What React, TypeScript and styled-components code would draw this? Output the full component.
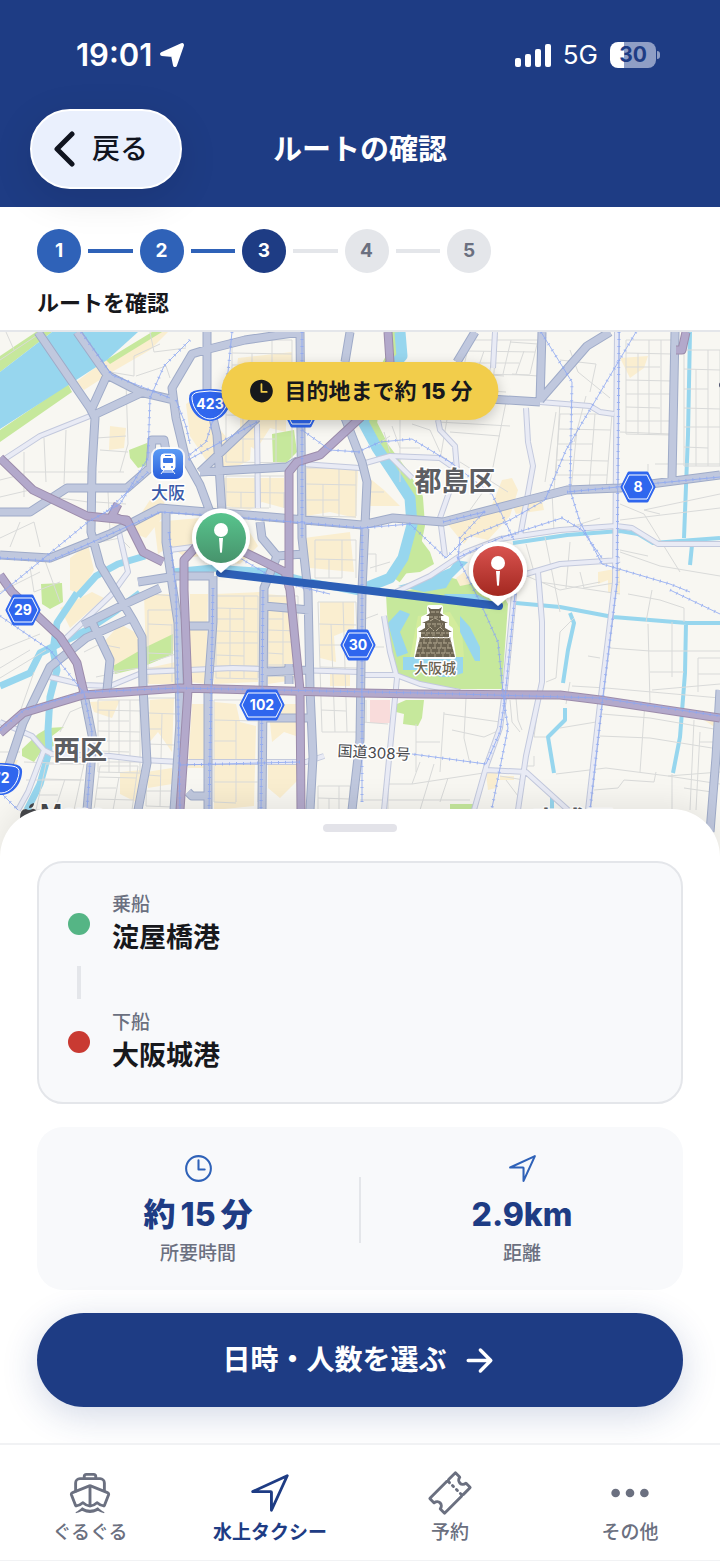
import React from 'react';
import styled, { createGlobalStyle, css } from 'styled-components';
import {
  IoArrowForward,
  IoBoatOutline,
  IoEllipsisHorizontal,
  IoNavigateOutline,
  IoTicketOutline,
  IoTime,
  IoTimeOutline,
} from 'react-icons/io5';

const colors = {
  navy: '#1e3c84',
  blue: '#2f62b8',
  ink: '#17181c',
  gray: '#6b7080',
  line: '#e4e6ea',
  surface: '#f8f9fb',
  yellow: '#f2cd4b',
  green: '#55b585',
  red: '#c93a32',
};

const GlobalStyle = createGlobalStyle`
  * {
    box-sizing: border-box;
  }

  body {
    margin: 0;
    background: white;
    color: ${colors.ink};
    font-family: Inter, 'Noto Sans CJK JP', sans-serif;
  }

  button {
    font-family: inherit;
    cursor: pointer;
  }
`;

const Page = styled.div`
  display: flex;
  flex-direction: column;
`;

/* ---------- header ---------- */

const Header = styled.header`
  position: relative;
  z-index: 2;
  background: ${colors.navy};
  color: white;
`;

const StatusBar = styled.div`
  display: flex;
  align-items: center;
  justify-content: space-between;
  height: 109px;
  padding: 0 60px 0 76px;
`;

const StatusGroup = styled.div<{ $gap: number }>`
  display: flex;
  align-items: center;
  gap: ${({ $gap }) => $gap}px;
`;

const Clock = styled.span`
  font-size: 31px;
  line-height: 40px;
  font-weight: 600;
`;

const Network = styled.span`
  font-size: 26px;
  line-height: 40px;
`;

const Battery = styled.span`
  display: flex;
  align-items: center;
  gap: 1px;

  &::after {
    content: '';
    width: 3px;
    height: 8px;
    border-radius: 0 4px 4px 0;
    background: #8f9ec5;
  }
`;

const BatteryLevel = styled.span`
  width: 46px;
  height: 26px;
  border-radius: 8px;
  background: linear-gradient(90deg, white 30%, #8f9ec5 30%);
  color: ${colors.navy};
  font-size: 21px;
  line-height: 26px;
  font-weight: 700;
  text-align: center;
`;

const NavBar = styled.div`
  display: grid;
  grid-template-columns: 1fr auto 1fr;
  align-items: center;
  padding: 0 30px 18px;
`;

const BackButton = styled.button`
  display: flex;
  align-items: center;
  justify-self: start;
  gap: 16px;
  height: 80px;
  padding: 0 32px 0 20px;
  border: 2px solid white;
  border-radius: 40px;
  background: #eaf0fd;
  color: #10141f;
  font-size: 28px;
  line-height: 40px;
  font-weight: 500;
  box-shadow: 0 10px 40px rgba(0, 0, 0, 0.1);
`;

const Title = styled.h1`
  margin: 0;
  padding-top: 2px;
  font-size: 29px;
  line-height: 40px;
  font-weight: 700;
`;

/* ---------- steps ---------- */

const StepSection = styled.section`
  padding: 22px 37px 11px;
  border-bottom: 2px solid ${colors.line};
`;

const StepList = styled.ol`
  display: flex;
  align-items: center;
  gap: 7px;
  max-width: 454px;
  margin: 0 0 14px;
  padding: 0;
  list-style: none;
`;

type StepState = 'done' | 'current' | 'todo';

const stepColors = {
  done: css`
    background: ${colors.blue};
    color: white;
  `,
  current: css`
    background: ${colors.navy};
    color: white;
  `,
  todo: css`
    background: ${colors.line};
    color: ${colors.gray};
  `,
};

const StepCircle = styled.li<{ $state: StepState }>`
  flex: none;
  width: 44px;
  height: 44px;
  border-radius: 50%;
  font-size: 19px;
  line-height: 44px;
  font-weight: 700;
  text-align: center;
  ${({ $state }) => stepColors[$state]}
`;

const StepBar = styled.li<{ $done: boolean }>`
  flex: 1;
  height: 4px;
  background: ${({ $done }) => ($done ? colors.blue : colors.line)};
`;

const StepLabel = styled.p`
  margin: 0;
  font-size: 22px;
  line-height: 32px;
  font-weight: 700;
`;

/* ---------- map ---------- */

const MapArea = styled.section`
  position: relative;
  height: 528px;
  background: #f8f7f2;
`;

const MapSvg = styled.svg`
  display: block;
  width: 100%;
  height: 100%;
`;

const EtaPill = styled.div`
  position: absolute;
  top: 30px;
  left: 50%;
  transform: translateX(-50%);
  display: flex;
  align-items: center;
  gap: 9px;
  height: 58px;
  padding: 0 26px;
  border-radius: 29px;
  background: ${colors.yellow};
  font-size: 22px;
  line-height: 32px;
  font-weight: 700;
  white-space: nowrap;
  box-shadow: 0 4px 14px rgba(0, 0, 0, 0.2);
`;

const Amount = styled.span`
  margin: 0 5px;
  font-weight: 800;
`;

/* ---------- sheet ---------- */

const Sheet = styled.main`
  position: relative;
  display: flex;
  flex-direction: column;
  margin-top: -51px;
  padding: 15px 37px 36px;
  border-radius: 48px 48px 0 0;
  background: white;
  box-shadow: 0 -6px 30px rgba(0, 0, 0, 0.08);
`;

const Handle = styled.div`
  align-self: center;
  width: 74px;
  height: 8px;
  margin-bottom: 29px;
  border-radius: 4px;
  background: #e3e3e9;
`;

const PortCard = styled.div`
  padding: 28px 29px 27px;
  border: 2px solid ${colors.line};
  border-radius: 26px;
  background: ${colors.surface};
`;

const Port = styled.div`
  display: flex;
  align-items: center;
  gap: 22px;
`;

const PortDot = styled.span<{ $color: string }>`
  width: 22px;
  height: 22px;
  border-radius: 50%;
  background: ${({ $color }) => $color};
`;

const Connector = styled.div`
  width: 4px;
  height: 33px;
  margin: 9px 9px 10px;
  background: ${colors.line};
`;

const Caption = styled.p`
  margin: 0;
  color: ${colors.gray};
  font-size: 19px;
  line-height: 28px;
  font-weight: 500;
`;

const PortName = styled.p`
  margin: 0;
  font-size: 27px;
  line-height: 38px;
  font-weight: 700;
`;

const SummaryCard = styled.div`
  display: grid;
  grid-template-columns: 1fr 2px 1fr;
  align-items: center;
  margin: 23px 0;
  padding: 25px 0 22px;
  border-radius: 26px;
  background: ${colors.surface};
`;

const Summary = styled.div`
  display: flex;
  flex-direction: column;
  align-items: center;
  color: ${colors.blue};
`;

const SummaryValue = styled.p`
  margin: 10px 0 5px;
  color: ${colors.navy};
  font-size: 32px;
  line-height: 40px;
  font-weight: 800;
`;

const Divider = styled.div`
  height: 66px;
  background: ${colors.line};
`;

const NextButton = styled.button`
  display: flex;
  align-items: center;
  justify-content: center;
  gap: 14px;
  height: 94px;
  border: none;
  border-radius: 47px;
  background: ${colors.navy};
  color: white;
  font-size: 28px;
  line-height: 40px;
  font-weight: 700;
  box-shadow: 0 8px 36px rgba(30, 60, 132, 0.2);
`;

/* ---------- tab bar ---------- */

const TabBar = styled.nav`
  position: relative;
  display: grid;
  grid-template-columns: repeat(4, 1fr);
  padding: 25px 0 13px;
  border-top: 2px solid #f1f2f4;
  border-bottom: 1px solid #f1f2f4;
  background: white;
`;

const Tab = styled.a<{ $active?: boolean }>`
  display: flex;
  flex-direction: column;
  align-items: center;
  gap: 3px;
  color: ${({ $active }) => ($active ? colors.navy : colors.gray)};
  font-size: 19px;
  line-height: 28px;
  font-weight: ${({ $active }) => ($active ? 700 : 500)};
  text-decoration: none;
`;

/* ---------- map drawing ---------- */

const streetGrid = (
  x0: number,
  y0: number,
  x1: number,
  y1: number,
  cols: number,
  rows: number,
  skew = 0,
) => {
  let d = '';
  for (let i = 0; i <= cols; i++) {
    const x = Math.round(x0 + ((x1 - x0) * i) / cols);
    const top = i % 3 === 1 ? y0 + Math.round((y1 - y0) / rows) : y0;
    d += `M${x} ${top}L${x - skew} ${y1}`;
  }
  for (let j = 0; j <= rows; j++) {
    const y = Math.round(y0 + ((y1 - y0) * j) / rows);
    const shift = Math.round((skew * j) / rows);
    const right = j % 3 === 2 ? x1 - Math.round((x1 - x0) / cols) : x1;
    d += `M${x0 - shift} ${y}L${right - shift} ${y + (j % 2)}`;
  }
  return d;
};

const streets = [
  streetGrid(470, 8, 538, 42, 5, 3, 8),
  streetGrid(626, 8, 672, 102, 4, 7),
  streetGrid(684, 18, 720, 134, 3, 6),
  streetGrid(560, 82, 612, 158, 3, 5, 6),
  streetGrid(98, 368, 140, 440, 4, 7),
  streetGrid(148, 366, 176, 474, 2, 7, 2),
  streetGrid(216, 264, 258, 346, 3, 7),
  streetGrid(214, 368, 258, 470, 2, 5),
  streetGrid(268, 264, 298, 344, 2, 7),
  streetGrid(318, 270, 356, 400, 3, 6, -4),
  streetGrid(318, 454, 350, 478, 3, 2),
  streetGrid(46, 432, 84, 478, 2, 3, 10),
  streetGrid(100, 434, 138, 478, 2, 4, 6),
  streetGrid(315, 208, 356, 246, 3, 2),
  streetGrid(232, 8, 292, 46, 3, 3),
  streetGrid(226, 60, 292, 130, 4, 3),
  streetGrid(226, 144, 284, 176, 4, 2),
  streetGrid(306, 136, 356, 184, 3, 3),
  streetGrid(148, 278, 172, 350, 1, 5),
  'M0 28L36 4M6 0L14 18M24 140H90M24 120V165M44 106L46 150M66 98L64 152M0 206L34 190L40 215M0 165L30 158L60 166L88 170',
  'M0 148L24 142M10 215L20 190M30 235L34 260L60 250M44 226L60 270M0 260L40 240M96 106L126 104M100 118L128 120M98 140H124M126 50L128 112L120 140M110 40L134 44V24L160 12',
  'M136 44L166 34L170 46M150 0L154 20L186 16M100 210L120 206L130 216M96 170L126 172M108 160L110 200M0 318L40 302M0 336L30 318M0 346L46 318M34 340L20 380L4 400M60 400L70 380L84 374',
  'M0 420H20M24 430L84 432M26 448H84M110 340L140 336M96 345L120 340M84 320L100 312L120 316M148 262L176 264M150 330L176 322',
  'M400 60V150M412 92L430 98L440 120M438 90L510 94M450 70L440 128M460 130L508 160M506 70L490 150L470 178M556 80L545 150M392 94L400 116H420M382 84L430 80M384 100L390 120M378 112L390 104M366 160H384M368 222H376V240M370 236L390 230',
  'M450 100L500 104M455 40L504 44M440 56L506 60M497 4L492 64M510 10L538 12M512 42L538 44M560 28L596 32L590 60M570 18L578 40L610 66M586 64L574 110M560 70L556 140',
  'M660 182L644 178L720 162M644 182L680 240M620 172L644 182M620 188L720 176M655 132H720M620 100L670 102M648 132V145M620 220L660 234L720 244M552 160L554 200L600 186M545 205L560 280M570 210L566 256',
  'M517 240L560 258L600 250M526 212L534 240M540 250L620 262M580 240L584 256L620 250M628 262L660 268L684 276V290M652 258L646 290M620 218L648 224',
  'M610 316L650 319H720M588 324L600 326M648 292L650 372M650 340H684M672 290V345M698 326V360M698 326H720M698 342H720M652 358L720 352M570 350L566 372M572 354L606 356L720 366M546 350L556 346L560 300L574 286',
  'M602 382L650 386L720 398M600 404L650 406L712 416M645 370L640 440M560 396L596 390M556 442L606 436L668 444L720 440M594 458L618 456L624 448L654 450L656 440M672 442V478M694 388L690 478M700 400L696 478M684 456L712 460M668 444L720 452M700 410H716',
  'M416 392V440M416 410H440M444 380L440 440M444 382L500 390M466 366L464 406L470 432M452 398L484 405L500 398M388 452H412L490 440M434 432L420 478M448 446L440 470M360 468H470M388 478V452M412 452L420 430M510 368L512 390L520 400M516 366L518 388L522 398M540 360L534 405H546M534 424V434H526',
  'M360 315H384M362 390L388 392M366 368V390M362 288L378 282M500 444L524 448M506 448L518 464',
].join('');

const beige = [
  'M76 50L108 26L126 22L158 0H168L150 18L112 40L84 58Z',
  'M110 94L126 96L124 116L109 118Z',
  'M186 72L204 60L212 88L232 112L252 98L250 128L226 140L206 128L190 104Z',
  'M226 66L260 80L286 78V100L270 96L256 118L240 108V86Z',
  'M238 26L292 20V50L270 46L256 56L236 44Z',
  'M154 190L200 186L210 196L246 194L258 214L240 232L200 224L186 226L170 214L158 222Z',
  'M224 146H284V176L262 170L250 178L226 174Z',
  'M106 190L130 198L150 168L166 160L162 186L146 206Z',
  'M70 226L88 212L94 238L80 262L70 258Z',
  'M306 134L358 138L356 186L330 180L306 184Z',
  'M304 206L350 200L354 240L310 236Z',
  'M60 276L92 260L104 266L70 296Z',
  'M120 292L142 304L138 332L112 338L104 310Z',
  'M144 262L174 262L178 318L146 324Z',
  'M148 336L176 330V352H148ZM150 368L174 366L172 420L158 400L148 412ZM90 370L120 368L112 386L94 380Z',
  'M190 262H208L206 352L190 350ZM192 372H206V436H188Z',
  'M216 262L260 260L258 350L214 352Z',
  'M214 370L236 372L240 390L256 394L254 474L214 478Z',
  'M266 262L288 264L294 348L268 352Z',
  'M268 372H296V404L284 400L272 410ZM268 430H298V448L280 466L268 456Z',
  'M320 270H354V296L334 304L336 330L320 326ZM330 340H350V354H330Z',
  'M120 440L142 438L136 470L120 462ZM146 440L172 436V452L148 456Z',
  'M362 140L384 158L400 174H368Z',
  'M446 190L490 178L502 148L512 146L518 158L510 184L488 208L470 204L464 212Z',
  'M512 172L542 168L544 178L516 182Z',
  'M620 26L648 24L644 36L630 46Z',
  'M598 240L620 236V262L608 260V248L598 252Z',
  'M486 442L498 438L496 456L488 458ZM500 444H514V448H500Z',
  'M702 378L716 382V396L704 388ZM0 430L18 428L14 438H0Z',
].join('');

const greens = [
  'M0 24L36 0H52L0 40Z',
  'M0 98L68 52L72 60L0 110Z',
  'M106 28L152 0H162L110 32Z',
  'M272 102L294 98L297 120L286 131L273 130Z',
  'M129 118L147 111V133L138 136L130 126Z',
  'M41 252L62 251L63 270L50 277L42 272Z',
  'M113 334L144 316L173 302V322L140 336L115 342Z',
  'M22 417L38 402L48 396L64 395L52 404L54 414L42 418L34 430L22 424Z',
  'M298 346H303V353H299Z',
  'M397 372L406 368H424L422 386L418 394L403 392L404 382L396 380Z',
  'M450 472H474L470 480H450Z',
].join('');

const waterways = [
  'M690 0L688 103L684 206',
  'M692 213L690 233',
  'M513 211L567 203L620 199L638 202L653 211L720 206',
  'M516 271L560 275L613 285L687 291H720',
  'M686 291L685 341L680 405L673 441',
  'M570 281L574 291L568 318L563 351',
  'M565 376V388L548 405L554 441',
  'M552 464V478',
].join('');

const canals = [
  'M140 261L117 278L87 298L67 308L40 321L30 341L0 354',
  'M77 261L57 291L53 318L57 338L50 365L48 398L49 420L40 452L27 478',
  'M78 264L96 244L118 232L145 224M172 240L213 236L270 240L310 250L360 260L376 256',
].join('');

const lightRoads = [
  'M495 0L493 36M540 70L590 74L600 80L614 82',
  'M526 76L528 110L533 134L520 205',
  'M438 88L440 98L455 114L457 138L440 186L445 224',
  'M362 132L390 124L440 126L460 140M390 124L412 146',
  'M617 0L615 250L600 372L588 478',
  'M396 260L430 244L466 220L500 207L560 198L616 194L632 196L658 212L720 212',
  'M526 242L560 232L620 228',
  'M538 240L542 290V350L526 424L518 478',
  'M516 240L514 262L504 366L500 396L487 432L474 478',
  'M384 284L390 320L397 346L384 478',
  'M360 343H396L420 352L460 360',
  'M486 438L526 440L568 478',
  'M0 130L40 104L90 84',
  'M50 345L84 353L110 354L144 340L233 336L360 340',
  'M50 422L110 424L143 428L180 430L306 430L324 424',
  'M0 390L32 404L44 418L28 460L18 478M44 418L52 422',
  'M414 498L408 478M118 196L128 240L112 262L60 312',
  'M257 92L258 176M302 132L360 136M170 218L200 214',
].join('');

const mainRoads = [
  'M38 0L90 76L95 86L92 136L91 200L100 233L133 288L142 305L143 355L147 431L138 478',
  'M77 0L107 43L140 60L174 68',
  'M107 43L92 76M143 60L94 83',
  'M300 0L245 8L205 18L192 22L172 56L176 86L186 128L200 153L210 180',
  'M207 0V60L217 103L222 180',
  'M300 0L302 206L308 260L310 358L313 425L310 478',
  'M350 0L345 30M345 86L362 130L367 150L365 193L362 258L360 408L352 478',
  'M0 180H30L67 156H127L150 136L152 108H164L168 130',
  'M0 223L50 226L110 202L160 176L207 180L247 183L362 193L393 186L443 190L520 170L567 158L620 156L720 143',
  'M200 140L287 135L302 126M200 140L257 86',
  'M166 180V210L173 258L178 291L180 391L174 478',
  'M213 244V290L208 358V478',
  'M260 190L262 206L277 224L264 256L262 478M277 224L303 222',
  'M133 285L86 306L50 335L23 391L8 436',
  'M83 358L93 408L87 478M92 290L110 328L107 358',
  'M83 293L125 272L160 256M138 250L176 244H214',
  'M188 294H210M264 274L310 278M264 340L310 338M262 386H310M188 460L192 464H208',
  'M475 0L457 30M542 0L540 70M610 0L587 14L540 68M490 67L540 70',
  'M675 0L672 146M720 358L716 425L710 500M289 332V352',
].join('');

const expressways = [
  'M0 126L33 158L87 184L127 188L143 220L163 230',
  'M0 243L12 260L60 305L77 331L84 361',
  'M0 401L23 381L83 363L180 356L360 361L420 362L560 363L600 368L720 386',
  'M180 478L188 358L184 258V228L195 216L240 218L285 240L290 258L300 358L301 478',
  'M289 256V140L297 130L320 123L360 86L390 30L388 0M118 172L112 184L127 190M686 0L682 18H676',
].join('');

const railways = [
  'M81 0L112 43L170 66M190 8L164 34L150 66L148 126L120 172L88 190L0 262',
  'M232 0L228 40L206 110L188 124M257 90L188 128M148 140L104 182M302 98L330 118L360 120',
  'M0 226L50 229L160 180L247 186L362 196M169 200L176 258L180 478M302 0V206',
  'M213 256L209 478M263 258L261 478M300 430L180 433M0 398L24 378L84 360L180 356L420 361L600 366L720 384',
  'M362 118L380 110L412 107L450 130L492 162L514 208M541 0L572 50L570 158L580 190L602 232L670 252L690 260',
  'M636 0L566 118L545 168L510 188L466 206L446 226L410 192L362 196',
  'M619 0L617 250L602 372L590 478M457 226L500 206L562 186L582 198L602 226',
  'M443 190L484 180L460 206L458 226L470 250L480 270L498 310L504 370L508 396L492 476',
  'M515 262L505 366L500 400L486 432L412 422M0 284L50 318L84 361L92 400L87 478M362 196L362 470M0 460L18 478',
  'M567 160L720 145M240 226L280 250L330 262M670 258L720 282M176 68L186 94L190 112',
].join('');

interface ShieldProps {
  x: number;
  y: number;
  label: string;
  wide?: boolean;
}

const HexShield: React.FC<ShieldProps> = ({ x, y, label, wide }) => {
  const e = wide ? 14 : 9;
  return (
    <g transform={`translate(${x} ${y})`}>
      <path
        d={`M${-e} -14H${e}L${e + 7} 0L${e} 14H${-e}L${-e - 7} 0Z`}
        fill="#2f66ee"
        stroke="#2f66ee"
        strokeWidth="3"
        strokeLinejoin="round"
      />
      <path
        d={`M${-e} -12H${e}L${e + 6} 0L${e} 12H${-e}L${-e - 6} 0Z`}
        fill="#2f66ee"
        stroke="white"
        strokeWidth="1"
        strokeLinejoin="round"
      />
      <text y="5" fontSize="14" fontWeight="700" fill="white" textAnchor="middle">
        {label}
      </text>
    </g>
  );
};

const RoundShield: React.FC<ShieldProps> = ({ x, y, label }) => (
  <g transform={`translate(${x} ${y})`}>
    <path
      d="M-12 -15Q0 -17 12 -15Q22 -14 21 -6C20 6 11 16 0 16C-11 16 -20 6 -21 -6Q-22 -14 -12 -15Z"
      fill="#2f66ee"
    />
    <path
      d="M-11 -13Q0 -15 11 -13Q19 -12 18 -6C17 4 9 14 0 14C-9 14 -17 4 -18 -6Q-19 -12 -11 -13Z"
      fill="#2f66ee"
      stroke="white"
      strokeWidth="1"
    />
    <text y="4" fontSize="14" fontWeight="700" fill="white" textAnchor="middle">
      {label}
    </text>
  </g>
);

const Pin: React.FC<{ x: number; y: number; fill: string }> = ({ x, y, fill }) => (
  <g transform={`translate(${x} ${y})`}>
    <path
      d="M0 35L-9 27A29 29 0 1 1 9 27Z"
      fill="white"
      filter="url(#pinShadow)"
    />
    <circle r="25" fill={fill} />
    <circle cy="-8" r="7" fill="white" />
    <path d="M-2 0H2L1 14Q0 16 -1 14Z" fill="white" />
  </g>
);

const Castle: React.FC = () => (
  <g transform="translate(435 300)">
    <path
      d="M-6 -25H6V-17L12 -14V-6L16 -3V5L19 25H-19L-16 5V-3L-12 -6V-14L-6 -17Z"
      fill="white"
      stroke="white"
      strokeWidth="4"
      strokeLinejoin="round"
    />
    <g fill="#6b6351">
      <path d="M-7 -25L-4 -23H4L7 -25L5 -19L9 -16H-9L-5 -19Z" />
      <path d="M-6 -16H6V-12L13 -9H-13L-6 -12Z" />
      <path d="M-10 -9H10V-4L17 0H-17L-10 -4Z" />
      <path d="M-14 0H14V5H-14ZM-15 6H15L20 25H-20Z" />
    </g>
    <path
      d="M-4 -20H4M-6 -15H6M-8 -8H8M-14 1H14M-16 6H16M-5 -11L0 -14L5 -11M-9 -1L-5 -5L-1 -1M1 -1L5 -5L9 -1M-17 11H17M-18 16H18M-19 21H19"
      fill="none"
      stroke="#b8ae96"
      strokeWidth="1"
      strokeDasharray="4 1"
    />
    <path
      d="M-11 7V11M-5 7V11M2 7V11M9 7V11M-14 12V16M-7 12V16M0 12V16M6 12V16M13 12V16M-12 17V21M-4 17V21M4 17V21M10 17V21M-15 22V25M-8 22V25M0 22V25M8 22V25M15 22V25M-6 -7V-5M0 -7V-5M6 -7V-5M-10 3H-7M-3 3H0M5 3H8"
      stroke="#a89e86"
      strokeWidth="1"
    />
  </g>
);

const StationBadge: React.FC = () => (
  <g transform="translate(168 132)">
    <rect x="-17" y="-17" width="34" height="34" rx="9" fill="white" opacity="0.8" />
    <rect x="-15" y="-15" width="30" height="30" rx="7" fill="url(#stationFill)" />
    <path
      d="M-4 -10H4Q7 -10 7 -7V3Q7 6 4 6H-4Q-7 6 -7 3V-7Q-7 -10 -4 -10ZM-4 6L-7 10M4 6L7 10M-5 8H5"
      fill="white"
      stroke="white"
      strokeWidth="1"
    />
    <rect x="-5" y="-6" width="10" height="5" rx="1" fill="#3a76e6" />
    <rect x="-3" y="-9" width="6" height="1" fill="#3a76e6" />
    <circle cx="-4" cy="3" r="1" fill="#3a76e6" />
    <circle cx="4" cy="3" r="1" fill="#3a76e6" />
  </g>
);

const RouteMap: React.FC = () => (
  <MapSvg
    viewBox="0 0 720 528"
    preserveAspectRatio="xMidYMin slice"
    role="img"
    aria-label="淀屋橋港から大阪城港までの地図"
    fill="none"
    strokeLinejoin="round"
  >
    <defs>
      <linearGradient id="greenPin" x1="0" y1="0" x2="0" y2="1">
        <stop offset="0" stopColor="#58c48d" />
        <stop offset="1" stopColor="#47936c" />
      </linearGradient>
      <linearGradient id="redPin" x1="0" y1="0" x2="0" y2="1">
        <stop offset="0" stopColor="#d9534f" />
        <stop offset="1" stopColor="#a32820" />
      </linearGradient>
      <linearGradient id="stationFill" x1="0" y1="0" x2="0" y2="1">
        <stop offset="0" stopColor="#5b9bf5" />
        <stop offset="1" stopColor="#2a5fdc" />
      </linearGradient>
      <filter id="pinShadow" x="-50%" y="-50%" width="200%" height="200%">
        <feDropShadow dx="0" dy="2" stdDeviation="3" floodOpacity="0.25" />
      </filter>
    </defs>

    <rect width="720" height="528" fill="#f8f7f2" />
    <path d={beige} fill="#faeed0" />
    <path d={greens} fill="#c6e89c" />
    <path d="M370 368H390V391H370Z" fill="#f9dcdb" />
    <path d="M0 40L52 0H138L107 28L70 52L0 97Z" fill="#97d6ee" />

    <path
      d="M392 0L394 24L374 60L370 92L382 116L400 140L416 166L418 193L412 222L394 246"
      stroke="#c6e89c"
      strokeWidth="14"
    />
    <path d="M412 196L430 220L434 232L420 240L400 242Z" fill="#c6e89c" />
    <path
      d="M400 0L402 24L374 56L363 90L377 116L393 140L410 166L412 193L403 226L390 246L360 258"
      stroke="#97d6ee"
      strokeWidth="11"
    />
    <path
      d="M386 262L420 256L452 246L500 258L508 272L502 357H460L413 351L397 341L388 300Z"
      fill="#c6e89c"
    />
    <path d="M418 284L450 280L462 300L464 325H410Z" fill="#d3ec9c" />
    <path
      d="M398 254L426 246L450 236L456 228L468 230L452 246L446 256L424 260ZM388 291L400 278L410 282L400 300L408 321L397 325ZM403 325H463V341L450 345H440L427 338H403ZM460 284L470 295L480 315V329H475L460 300ZM444 262H476L492 270L448 268Z"
      fill="#97d6ee"
    />
    <path d="M456 246L464 240L470 252L460 254Z" fill="#faeed0" />
    <path d={waterways} stroke="#97d6ee" strokeWidth="4" />
    <path d={canals} stroke="#97d6ee" strokeWidth="7" />

    <path d={streets} stroke="#d9dad9" strokeWidth="1" />
    <path d={lightRoads} stroke="#c3c9dd" strokeWidth="6" />
    <path d={lightRoads} stroke="#e9ebf5" strokeWidth="4" />
    <path d={mainRoads} stroke="#9fabc8" strokeWidth="9" />
    <path d={mainRoads} stroke="#c0c8de" strokeWidth="7" />
    <path d={expressways} stroke="#9c8cab" strokeWidth="9" />
    <path d={expressways} stroke="#b3a9cb" strokeWidth="7" />
    <g stroke="#8ba6f2" opacity="0.8">
      <path d={railways} strokeWidth="1" />
      <path d={railways} strokeWidth="3" strokeDasharray="1 6" />
    </g>

    <RoundShield x={210} y={73} label="423" />
    <HexShield x={301} y={80} label="1" />
    <HexShield x={638} y={155} label="8" />
    <HexShield x={23} y={278} label="29" />
    <HexShield x={358} y={313} label="30" />
    <HexShield x={262} y={373} label="102" wide />
    <RoundShield x={1} y={447} label="72" />
    <circle cx="722" cy="53" r="3" fill="#4a4f6a" />

    <StationBadge />
    <Castle />

    <g
      stroke="white"
      strokeWidth="3"
      paintOrder="stroke"
      fontFamily="Inter, 'Noto Sans CJK JP', sans-serif"
    >
      <g textAnchor="middle">
        <text x="168" y="167" fontSize="17" fontWeight="500" fill="#3a5aa8">
          大阪
        </text>
        <text x="435" y="341" fontSize="14" fontWeight="500" fill="#6b6351">
          大阪城
        </text>
        <text x="455" y="159" fontSize="27" fontWeight="700" fill="#5d5e62">
          都島区
        </text>
        <text x="80" y="428" fontSize="27" fontWeight="700" fill="#5d5e62">
          西区
        </text>
        <text x="374" y="426" fontSize="15" fill="#46474b" transform="rotate(3 374 420)">
          国道308号
        </text>
        <text x="573" y="499" fontSize="27" fontWeight="700" fill="#5d5e62">
          東成区
        </text>
      </g>
      <text x="40" y="490" fontSize="24" fontWeight="600" fill="#46474b">
        Maps
      </text>
    </g>
    <path
      d="M29 476Q29 472 34 471Q34 476 29 476ZM20 486Q20 477 26 477Q29 479 32 477Q35 476 37 480V494H22Z"
      fill="#46474b"
    />

    <path d="M220 241L499 274" stroke="#2d5fb6" strokeWidth="8" strokeLinecap="round" />
    <Pin x={221} y={206} fill="url(#greenPin)" />
    <Pin x={498} y={239} fill="url(#redPin)" />
  </MapSvg>
);

/* ---------- screen ---------- */

const TOTAL_STEPS = 5;
const CURRENT_STEP = 3;

const stepState = (step: number): StepState => {
  if (step < CURRENT_STEP) return 'done';
  return step === CURRENT_STEP ? 'current' : 'todo';
};

const tabs = [
  { label: 'ぐるぐる', icon: IoBoatOutline },
  { label: '水上タクシー', icon: IoNavigateOutline, active: true },
  { label: '予約', icon: IoTicketOutline },
  { label: 'その他', icon: IoEllipsisHorizontal },
];

const App: React.FC = () => {
  return (
    <Page>
      <GlobalStyle />
      <Header>
        <StatusBar>
          <StatusGroup $gap={7}>
            <Clock>19:01</Clock>
            <svg width="26" height="26" viewBox="0 0 26 26" aria-hidden="true">
              <path
                d="M23 3L16 23L14 13L3 12Z"
                fill="white"
                stroke="white"
                strokeWidth="4"
                strokeLinejoin="round"
              />
            </svg>
          </StatusGroup>
          <StatusGroup $gap={12}>
            <svg width="36" height="24" viewBox="0 0 36 24" fill="white" aria-hidden="true">
              <rect x="0" y="15" width="6" height="9" rx="2" />
              <rect x="10" y="11" width="6" height="13" rx="2" />
              <rect x="20" y="6" width="6" height="18" rx="2" />
              <rect x="30" y="1" width="6" height="23" rx="2" />
            </svg>
            <Network>5G</Network>
            <Battery>
              <BatteryLevel>30</BatteryLevel>
            </Battery>
          </StatusGroup>
        </StatusBar>
        <NavBar>
          <BackButton type="button">
            <svg width="24" height="36" viewBox="0 0 24 36" fill="none" aria-hidden="true">
              <path
                d="M20 3L5 18L20 33"
                stroke="currentColor"
                strokeWidth="5"
                strokeLinecap="round"
                strokeLinejoin="round"
              />
            </svg>
            戻る
          </BackButton>
          <Title>ルートの確認</Title>
        </NavBar>
      </Header>

      <StepSection>
        <StepList>
          {Array.from({ length: TOTAL_STEPS }, (_, i) => i + 1).map((step) => (
            <React.Fragment key={step}>
              {step > 1 && <StepBar $done={step <= CURRENT_STEP} aria-hidden="true" />}
              <StepCircle $state={stepState(step)}>{step}</StepCircle>
            </React.Fragment>
          ))}
        </StepList>
        <StepLabel>ルートを確認</StepLabel>
      </StepSection>

      <MapArea>
        <RouteMap />
        <EtaPill>
          <IoTime size={28} />
          <span>
            目的地まで約<Amount>15</Amount>分
          </span>
        </EtaPill>
      </MapArea>

      <Sheet>
        <Handle />
        <PortCard>
          <Port>
            <PortDot $color={colors.green} />
            <div>
              <Caption>乗船</Caption>
              <PortName>淀屋橋港</PortName>
            </div>
          </Port>
          <Connector />
          <Port>
            <PortDot $color={colors.red} />
            <div>
              <Caption>下船</Caption>
              <PortName>大阪城港</PortName>
            </div>
          </Port>
        </PortCard>

        <SummaryCard>
          <Summary>
            <IoTimeOutline size={33} />
            <SummaryValue>
              約<Amount>15</Amount>分
            </SummaryValue>
            <Caption>所要時間</Caption>
          </Summary>
          <Divider />
          <Summary>
            <IoNavigateOutline size={33} />
            <SummaryValue>2.9km</SummaryValue>
            <Caption>距離</Caption>
          </Summary>
        </SummaryCard>

        <NextButton type="button">
          日時・人数を選ぶ
          <IoArrowForward size={37} />
        </NextButton>
      </Sheet>

      <TabBar>
        {tabs.map(({ label, icon: Icon, active }) => (
          <Tab key={label} href="#" $active={active}>
            <Icon size={46} />
            {label}
          </Tab>
        ))}
      </TabBar>
    </Page>
  );
};

export default App;
